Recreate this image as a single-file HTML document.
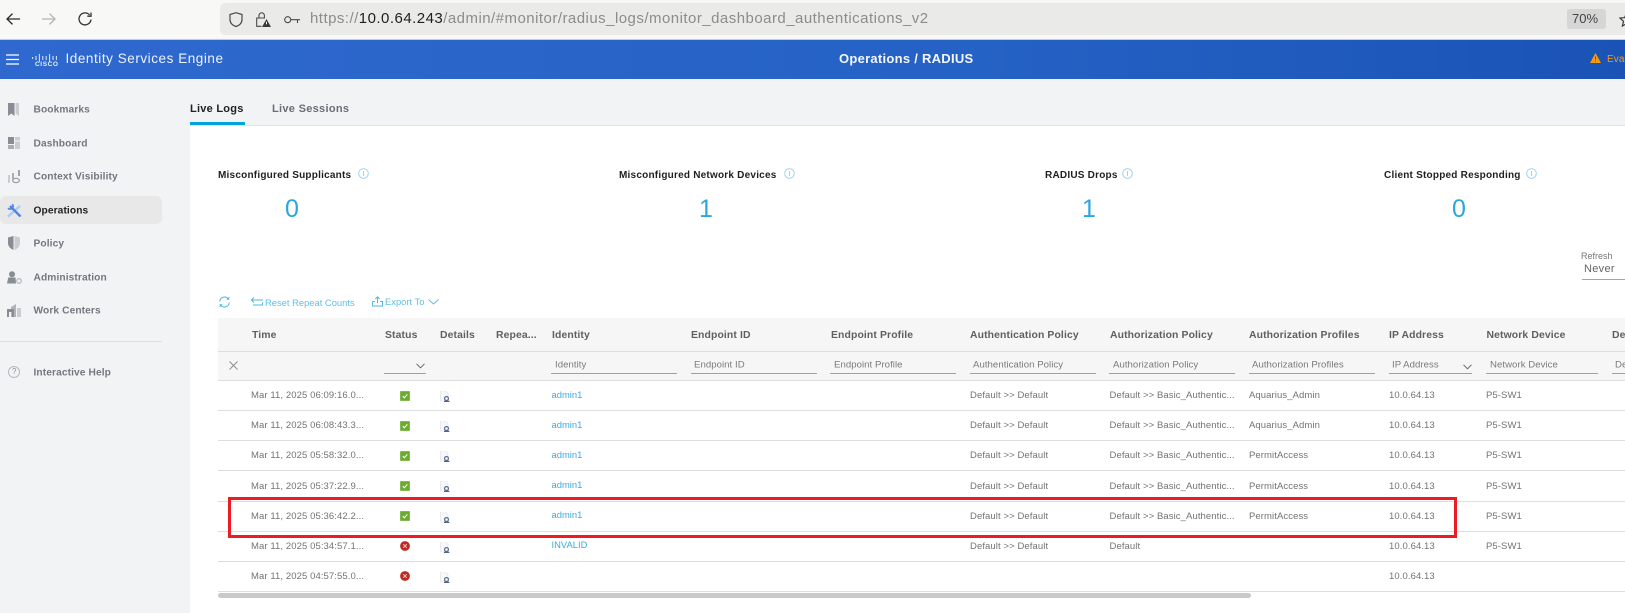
<!DOCTYPE html>
<html lang="en"><head><meta charset="utf-8"><title>Operations / RADIUS</title>
<style>
html,body{margin:0;padding:0;width:1625px;height:613px;overflow:hidden;background:#fff;font-family:"Liberation Sans",sans-serif}
#p{position:relative;width:1625px;height:613px;overflow:hidden}
.a{position:absolute}
.t{position:absolute;white-space:nowrap;line-height:14px;transform:translateY(-6px)}
.nav{font-size:10.2px;font-weight:bold;color:#73787f;left:33.5px;letter-spacing:.1px;transform:translateY(-5.5px)}
.st{font-size:10px;font-weight:bold;color:#1d1f22;letter-spacing:.22px;transform:translateY(-5px)}
.val{font-size:25px;color:#2aa7dc;transform:translate(-50%,-12px);line-height:26px}
.th{font-size:10.4px;font-weight:bold;color:#5f5f5f;letter-spacing:.12px}
.fl{font-size:9.6px;color:#7a7a7a;letter-spacing:.05px;transform:translateY(-5.5px)}
.td{font-size:9.5px;color:#737373;letter-spacing:.09px}
.ln{font-size:9.4px;color:#36ace0;letter-spacing:.02px;transform:translateY(-7px)}
.tb{font-size:9.4px;color:#60c0e8;letter-spacing:0}
.u{position:absolute;top:373px;height:1px;background:#a0a0a0}
.r{position:absolute;left:218px;width:1407px;height:1px;background:#dedede}
svg{position:absolute;overflow:visible}
</style></head><body><div id="p">
<svg width="0" height="0" style="position:absolute">
<defs>
<symbol id="ok" viewBox="0 0 10 10"><rect width="10" height="10" rx="1" fill="#69ac2e"/><rect x=".4" y=".4" width="9.2" height="9.2" rx="1" fill="none" stroke="#93c06a" stroke-width=".6"/><path d="M2.8 5.2 4.4 6.8 7.3 3.4" fill="none" stroke="#fff" stroke-width="1.1"/></symbol>
<symbol id="er" viewBox="0 0 10 10"><circle cx="5" cy="5" r="4.9" fill="#bf2a22"/><path d="M3.2 3.2 6.8 6.8M6.8 3.2 3.2 6.8" stroke="#f6d0cc" stroke-width="1"/></symbol>
<symbol id="dt" viewBox="0 0 10 11"><path d="M.5 0H5.5L8 2.5V10H.5Z" fill="#f8f8fa" stroke="#dfdfe2" stroke-width=".6"/><circle cx="6.5" cy="7.5" r="2.6" fill="#5d7397"/><circle cx="6.5" cy="7.5" r="1.3" fill="#fff"/><rect x="4" y="9.8" width="5.4" height="1" fill="#2c3e63"/></symbol>
<symbol id="ii" viewBox="0 0 11 11"><circle cx="5.5" cy="5.5" r="4.8" fill="none" stroke="#8fd0ee" stroke-width=".9"/><path d="M5.5 3v5" stroke="#8fd0ee" stroke-width=".9"/></symbol>
</defs></svg>

<!-- browser chrome -->
<div class="a" style="left:0;top:0;width:1625px;height:39px;background:#f8f8f6"></div>
<div class="a" style="left:0;top:39px;width:1625px;height:1px;background:#c9cbce"></div>
<div class="a" style="left:220px;top:3px;width:1405px;height:32px;background:#eaeae8;border-radius:5px 0 0 5px"></div>
<svg style="left:6px;top:13px" width="14" height="12" viewBox="0 0 14 12" fill="none" stroke="#2b2b2b" stroke-width="1.3"><path d="M14 6H1M6.5.6 1 6l5.500 5.400"/></svg>
<svg style="left:42px;top:13px" width="14" height="12" viewBox="0 0 14 12" fill="none" stroke="#b5b5b5" stroke-width="1.3"><path d="M0 6h13M7.500.6 13 6l-5.500 5.400"/></svg>
<svg style="left:78px;top:12px" width="14" height="14" viewBox="0 0 14 14" fill="none" stroke="#333" stroke-width="1.3"><path d="M11.600 3A6 6 0 1 0 13 7.500"/><path d="M13 .5v3.700H9.300"/></svg>
<svg style="left:229px;top:12px" width="14" height="15" viewBox="0 0 14 15" fill="none" stroke="#4a4a4a" stroke-width="1.2"><path d="M7 .7 13 2.500V7.500C13 11 10.500 13.300 7 14.500 3.500 13.300 1 11 1 7.500V2.500Z"/></svg>
<svg style="left:256px;top:12px" width="15" height="15" viewBox="0 0 15 15"><g fill="none" stroke="#4a4a4a" stroke-width="1.1"><path d="M3 6V3.500a2.700 2.700 0 0 1 5.400 0V6"/><path d="M5.500 14.300H.7V6H9"/></g><path d="M10.500 7 15 15H6Z" fill="#3a3a3a"/><path d="M10.500 9.800v2.500" stroke="#fff" stroke-width="1"/></svg>
<svg style="left:284px;top:16px" width="16" height="8" viewBox="0 0 16 8" fill="none" stroke="#4a4a4a" stroke-width="1.1"><circle cx="3.700" cy="3.700" r="3"/><path d="M6.700 3.700H16M13.500 3.700V7"/></svg>
<div class="t" style="left:310px;top:18px;font-size:15px;color:#8c8c8c;letter-spacing:.47px">https://<span style="color:#1f1f1f">10.0.64.243</span>/admin/#monitor/radius_logs/monitor_dashboard_authentications_v2</div>
<div class="a" style="left:1567px;top:9px;width:39px;height:20px;background:#d5d6d5;border-radius:3px"></div>
<div class="t" style="left:1572px;top:18px;font-size:13px;color:#444">70%</div>
<svg style="left:1619px;top:12px" width="15" height="15" viewBox="0 0 16 16" fill="none" stroke="#333" stroke-width="1.2"><path d="M8 1 10 6 15 6.500 11.200 10 12.400 15 8 12.400 3.600 15 4.800 10 1 6.500 6 6Z"/></svg>

<!-- blue header -->
<div class="a" style="left:0;top:40px;width:1625px;height:39px;background:linear-gradient(90deg,#2f69cf,#2562c5 60%,#1a53b5)"></div>
<svg style="left:6px;top:54px" width="13" height="11" viewBox="0 0 13 11" fill="none" stroke="#fff" stroke-width="1.3"><path d="M0 1h13M0 5.500h13M0 10h13"/></svg>
<svg style="left:32px;top:53px" width="27" height="10" viewBox="0 0 27 10" fill="none" stroke="#dfe9f8" stroke-width="1"><path d="M.6 4v2M4 3v4M7.400 1v8M10.800 3v4M14.200 3v4M17.600 1v8M21 3v4M24.400 3v4"/></svg>
<div class="t" style="left:35px;top:63.5px;font-size:6.5px;font-weight:bold;color:#e6eefa;letter-spacing:.6px">CISCO</div>
<div class="t" style="left:65.5px;top:58px;font-size:13.5px;color:#eef3fb;letter-spacing:.55px">Identity Services Engine</div>
<div class="t" style="left:839px;top:58px;font-size:13px;font-weight:bold;color:#f4f7fc;letter-spacing:.27px">Operations / RADIUS</div>
<svg style="left:1590px;top:53px" width="11" height="10" viewBox="0 0 11 10"><path d="M5.500 0 11 10H0Z" fill="#f59a0e"/><path d="M5.500 3.500v3.200M5.500 7.600v1" stroke="#2159bc" stroke-width="1"/></svg>
<div class="t" style="left:1607px;top:59px;font-size:10px;color:#f59a0e;letter-spacing:.1px">Eval</div>

<!-- sidebar + tab bar -->
<div class="a" style="left:0;top:79px;width:190px;height:534px;background:#f2f3f5"></div>
<div class="a" style="left:190px;top:79px;width:1435px;height:46px;background:#f2f3f5"></div>
<div class="a" style="left:190px;top:125px;width:1435px;height:1px;background:#e1e3e6"></div>
<div class="t" style="left:190px;top:107.5px;font-size:11px;font-weight:bold;color:#222;letter-spacing:.25px">Live Logs</div>
<div class="t" style="left:272px;top:107.5px;font-size:11px;font-weight:bold;color:#6a6e74;letter-spacing:.3px">Live Sessions</div>
<div class="a" style="left:190px;top:122px;width:55px;height:3px;background:#04a3db"></div>

<div class="a" style="left:0;top:196px;width:162px;height:28px;background:#e8e8e8;border-radius:6px"></div>
<svg style="left:8px;top:103px" width="12" height="13" viewBox="0 0 12 13"><path d="M0 0H6.500V13L3.300 10.500 0 13Z" fill="#888d94"/><path d="M7.500 0H11V13L7.500 10.500Z" fill="#c9cdd1"/></svg>
<svg style="left:8px;top:137px" width="12" height="12" viewBox="0 0 12 12"><rect width="6" height="7" fill="#888d94"/><rect x="7" width="5" height="3.500" fill="#c9cdd1"/><rect x="7" y="4.500" width="5" height="7.500" fill="#c9cdd1"/><rect y="8" width="6" height="4" fill="#a9adb3"/></svg>
<svg style="left:8px;top:170px" width="13" height="13" viewBox="0 0 13 13" fill="none"><path d="M1 5v8" stroke="#c9cdd1" stroke-width="2"/><path d="M5 3v6" stroke="#999da3" stroke-width="1.6"/><path d="M11 0v6" stroke="#888d94" stroke-width="1.6"/><ellipse cx="8" cy="10.500" rx="3.400" ry="2.200" stroke="#999da3" stroke-width="1.2"/></svg>
<svg style="left:7px;top:203px" width="15" height="15" viewBox="0 0 15 15" fill="none"><path d="M1 13.500 13 3" stroke="#a9c8f7" stroke-width="2.2"/><path d="M3 3 13.500 13.500" stroke="#4a86ea" stroke-width="2.4"/><path d="M5.300 1.200A2.800 2.800 0 1 1 1 5.200" stroke="#4a86ea" stroke-width="1.7"/></svg>
<svg style="left:8px;top:236px" width="12" height="14" viewBox="0 0 12 14"><path d="M5.500 0V14C2 12.500 0 10 0 7V1.500Z" fill="#888d94"/><path d="M6.500 0 12 1.500V7C12 10 10 12.500 6.500 14Z" fill="#c9cdd1"/></svg>
<svg style="left:7px;top:271px" width="15" height="13" viewBox="0 0 15 13"><circle cx="5" cy="3.200" r="3" fill="#888d94"/><path d="M0 12.500 1.200 6.500H8.500L9 12.500Z" fill="#888d94"/><circle cx="12" cy="10" r="2.300" fill="none" stroke="#b9bdc2" stroke-width="1.3"/></svg>
<svg style="left:7px;top:304px" width="14" height="13" viewBox="0 0 14 13"><path d="M4 13V3L9 0V13Z" fill="#b0b4ba"/><path d="M0 13V5H7V13H5V8H2V13Z" fill="#888d94"/><rect x="10" y="4" width="4" height="9" fill="#c9cdd1"/></svg>
<div class="a" style="left:0;top:341px;width:162px;height:1px;background:#dcdee1"></div>
<svg style="left:8px;top:366px" width="12" height="12" viewBox="0 0 12 12" fill="none"><circle cx="6" cy="6" r="5.500" stroke="#b5b9be" stroke-width="1"/></svg>
<div class="t" style="left:12px;top:371px;font-size:8px;color:#8a8e94">?</div>
<div class="t nav" style="top:109px">Bookmarks</div>
<div class="t nav" style="top:143px">Dashboard</div>
<div class="t nav" style="top:176px">Context Visibility</div>
<div class="t nav" style="top:210px;color:#222">Operations</div>
<div class="t nav" style="top:243px">Policy</div>
<div class="t nav" style="top:277px">Administration</div>
<div class="t nav" style="top:310px">Work Centers</div>
<div class="t nav" style="top:372px">Interactive Help</div>

<!-- stats -->
<div class="t st" style="left:218px;top:174px">Misconfigured Supplicants</div>
<svg style="left:358px;top:168px" width="11" height="11"><use href="#ii"/></svg>
<div class="t val" style="left:292px;top:208px">0</div>
<div class="t st" style="left:619px;top:174px">Misconfigured Network Devices</div>
<svg style="left:784px;top:168px" width="11" height="11"><use href="#ii"/></svg>
<div class="t val" style="left:706px;top:208px">1</div>
<div class="t st" style="left:1045px;top:174px">RADIUS Drops</div>
<svg style="left:1122px;top:168px" width="11" height="11"><use href="#ii"/></svg>
<div class="t val" style="left:1089px;top:208px">1</div>
<div class="t st" style="left:1384px;top:174px">Client Stopped Responding</div>
<svg style="left:1526px;top:168px" width="11" height="11"><use href="#ii"/></svg>
<div class="t val" style="left:1459px;top:208px">0</div>

<div class="t" style="left:1581px;top:255px;font-size:9px;color:#777">Refresh</div>
<div class="t" style="left:1584px;top:268px;font-size:11px;color:#666;letter-spacing:.3px">Never</div>
<div class="a" style="left:1582px;top:279px;width:43px;height:1px;background:#a5a5a5"></div>

<!-- toolbar -->
<svg style="left:219px;top:296px" width="11" height="12" viewBox="0 0 11 12" fill="none" stroke="#4db8e4" stroke-width="1"><path d="M.8 5.500A4.700 4.700 0 0 1 9.300 3L10.300 1M10.200 6.500A4.700 4.700 0 0 1 1.700 9L.7 11M10.300 3.200H7.800M.7 8.800H3.200"/></svg>
<svg style="left:251px;top:297px" width="12" height="9" viewBox="0 0 12 9" fill="none" stroke="#4db8e4" stroke-width="1"><path d="M3 .5.5 3 3 5.500M.5 3H12M2 8H11.500V5.500"/></svg>
<div class="t tb" style="left:265px;top:302px">Reset Repeat Counts</div>
<svg style="left:372px;top:296px" width="11" height="11" viewBox="0 0 11 11" fill="none" stroke="#4db8e4" stroke-width="1"><path d="M5.500 7V.8M3.300 3 5.500.8 7.700 3M.5 5.500V10H10.500V5.500H8M3 5.500H.5"/></svg>
<div class="t tb" style="left:385px;top:301px">Export To</div>
<svg style="left:428px;top:299px" width="11" height="6" viewBox="0 0 11 6" fill="none" stroke="#58bde6" stroke-width=".9"><path d="M.5.5 5.500 5 10.500.5"/></svg>

<!-- table -->
<div class="a" style="left:218px;top:318px;width:1407px;height:62px;background:#f6f6f6"></div>
<div class="r" style="top:351px"></div>
<div class="r" style="top:380px"></div>
<div class="r" style="top:410px"></div>
<div class="r" style="top:440px"></div>
<div class="r" style="top:470px"></div>
<div class="r" style="top:501px"></div>
<div class="r" style="top:531px"></div>
<div class="r" style="top:561px"></div>
<div class="r" style="top:591px"></div>
<div class="a" style="left:218px;top:593px;width:1033px;height:5px;background:#c9c9c9;border-radius:3px"></div>

<div class="t th" style="left:252px;top:335px">Time</div>
<div class="t th" style="left:385px;top:335px">Status</div>
<div class="t th" style="left:440px;top:335px">Details</div>
<div class="t th" style="left:496px;top:335px">Repea...</div>
<div class="t th" style="left:552px;top:335px">Identity</div>
<div class="t th" style="left:691px;top:335px">Endpoint ID</div>
<div class="t th" style="left:831px;top:335px">Endpoint Profile</div>
<div class="t th" style="left:970px;top:335px">Authentication Policy</div>
<div class="t th" style="left:1110px;top:335px">Authorization Policy</div>
<div class="t th" style="left:1249px;top:335px">Authorization Profiles</div>
<div class="t th" style="left:1389px;top:335px">IP Address</div>
<div class="t th" style="left:1486.5px;top:335px">Network Device</div>
<div class="t th" style="left:1612px;top:335px">De</div>

<svg style="left:229px;top:361px" width="9" height="9" viewBox="0 0 9 9" fill="none" stroke="#8a8a8a" stroke-width=".9"><path d="M.5.5 8.500 8.500M8.500.5.5 8.500"/></svg>
<svg style="left:416px;top:363px" width="9" height="6" viewBox="0 0 9 6" fill="none" stroke="#666" stroke-width="1"><path d="M.5.8 4.500 4.800 8.500.8"/></svg>
<svg style="left:1463px;top:364px" width="9" height="6" viewBox="0 0 9 6" fill="none" stroke="#666" stroke-width="1"><path d="M.5.8 4.500 4.800 8.500.8"/></svg>
<div class="u" style="left:384px;width:42px"></div>
<div class="u" style="left:551px;width:126px"></div>
<div class="u" style="left:691px;width:126px"></div>
<div class="u" style="left:830px;width:126px"></div>
<div class="u" style="left:970px;width:126px"></div>
<div class="u" style="left:1109px;width:126px"></div>
<div class="u" style="left:1249px;width:126px"></div>
<div class="u" style="left:1389px;width:83px"></div>
<div class="u" style="left:1486px;width:112px"></div>
<div class="u" style="left:1612px;width:13px"></div>
<div class="t fl" style="left:555px;top:364px">Identity</div>
<div class="t fl" style="left:694px;top:364px">Endpoint ID</div>
<div class="t fl" style="left:834px;top:364px">Endpoint Profile</div>
<div class="t fl" style="left:973px;top:364px">Authentication Policy</div>
<div class="t fl" style="left:1113px;top:364px">Authorization Policy</div>
<div class="t fl" style="left:1252px;top:364px">Authorization Profiles</div>
<div class="t fl" style="left:1392px;top:364px">IP Address</div>
<div class="t fl" style="left:1490px;top:364px">Network Device</div>
<div class="t fl" style="left:1615px;top:364px">De</div>

<!-- row 1 -->
<div class="t td" style="left:251px;top:395px">Mar 11, 2025 06:09:16.0...</div>
<svg style="left:400px;top:391px" width="10" height="10"><use href="#ok"/></svg>
<svg style="left:440px;top:391px" width="10" height="11"><use href="#dt"/></svg>
<div class="t ln" style="left:551.5px;top:394.5px">admin1</div>
<div class="t td" style="left:970px;top:395px">Default &gt;&gt; Default</div>
<div class="t td" style="left:1109.5px;top:395px">Default &gt;&gt; Basic_Authentic...</div>
<div class="t td" style="left:1249px;top:395px">Aquarius_Admin</div>
<div class="t td" style="left:1389px;top:395px">10.0.64.13</div>
<div class="t td" style="left:1486px;top:395px">P5-SW1</div>
<!-- row 2 -->
<div class="t td" style="left:251px;top:425px">Mar 11, 2025 06:08:43.3...</div>
<svg style="left:400px;top:421px" width="10" height="10"><use href="#ok"/></svg>
<svg style="left:440px;top:421px" width="10" height="11"><use href="#dt"/></svg>
<div class="t ln" style="left:551.5px;top:424.5px">admin1</div>
<div class="t td" style="left:970px;top:425px">Default &gt;&gt; Default</div>
<div class="t td" style="left:1109.5px;top:425px">Default &gt;&gt; Basic_Authentic...</div>
<div class="t td" style="left:1249px;top:425px">Aquarius_Admin</div>
<div class="t td" style="left:1389px;top:425px">10.0.64.13</div>
<div class="t td" style="left:1486px;top:425px">P5-SW1</div>
<!-- row 3 -->
<div class="t td" style="left:251px;top:455px">Mar 11, 2025 05:58:32.0...</div>
<svg style="left:400px;top:451px" width="10" height="10"><use href="#ok"/></svg>
<svg style="left:440px;top:451px" width="10" height="11"><use href="#dt"/></svg>
<div class="t ln" style="left:551.5px;top:454.5px">admin1</div>
<div class="t td" style="left:970px;top:455px">Default &gt;&gt; Default</div>
<div class="t td" style="left:1109.5px;top:455px">Default &gt;&gt; Basic_Authentic...</div>
<div class="t td" style="left:1249px;top:455px">PermitAccess</div>
<div class="t td" style="left:1389px;top:455px">10.0.64.13</div>
<div class="t td" style="left:1486px;top:455px">P5-SW1</div>
<!-- row 4 -->
<div class="t td" style="left:251px;top:485.5px">Mar 11, 2025 05:37:22.9...</div>
<svg style="left:400px;top:481px" width="10" height="10"><use href="#ok"/></svg>
<svg style="left:440px;top:481px" width="10" height="11"><use href="#dt"/></svg>
<div class="t ln" style="left:551.5px;top:485px">admin1</div>
<div class="t td" style="left:970px;top:485.5px">Default &gt;&gt; Default</div>
<div class="t td" style="left:1109.5px;top:485.5px">Default &gt;&gt; Basic_Authentic...</div>
<div class="t td" style="left:1249px;top:485.5px">PermitAccess</div>
<div class="t td" style="left:1389px;top:485.5px">10.0.64.13</div>
<div class="t td" style="left:1486px;top:485.5px">P5-SW1</div>
<!-- row 5 -->
<div class="t td" style="left:251px;top:515.5px">Mar 11, 2025 05:36:42.2...</div>
<svg style="left:400px;top:511px" width="10" height="10"><use href="#ok"/></svg>
<svg style="left:440px;top:512px" width="10" height="11"><use href="#dt"/></svg>
<div class="t ln" style="left:551.5px;top:515px">admin1</div>
<div class="t td" style="left:970px;top:515.5px">Default &gt;&gt; Default</div>
<div class="t td" style="left:1109.5px;top:515.5px">Default &gt;&gt; Basic_Authentic...</div>
<div class="t td" style="left:1249px;top:515.5px">PermitAccess</div>
<div class="t td" style="left:1389px;top:515.5px">10.0.64.13</div>
<div class="t td" style="left:1486px;top:515.5px">P5-SW1</div>
<!-- row 6 -->
<div class="t td" style="left:251px;top:545.5px">Mar 11, 2025 05:34:57.1...</div>
<svg style="left:400px;top:541px" width="10" height="10"><use href="#er"/></svg>
<svg style="left:440px;top:542px" width="10" height="11"><use href="#dt"/></svg>
<div class="t ln" style="left:551.5px;top:544.5px">INVALID</div>
<div class="t td" style="left:970px;top:545.5px">Default &gt;&gt; Default</div>
<div class="t td" style="left:1109.5px;top:545.5px">Default</div>
<div class="t td" style="left:1389px;top:545.5px">10.0.64.13</div>
<div class="t td" style="left:1486px;top:545.5px">P5-SW1</div>
<!-- row 7 -->
<div class="t td" style="left:251px;top:575.5px">Mar 11, 2025 04:57:55.0...</div>
<svg style="left:400px;top:571px" width="10" height="10"><use href="#er"/></svg>
<svg style="left:440px;top:572px" width="10" height="11"><use href="#dt"/></svg>
<div class="t td" style="left:1389px;top:575.5px">10.0.64.13</div>

<!-- red highlight -->
<div class="a" style="left:228px;top:497px;width:1229px;height:41px;box-sizing:border-box;border:3px solid #ed1c24"></div>
</div></body></html>
